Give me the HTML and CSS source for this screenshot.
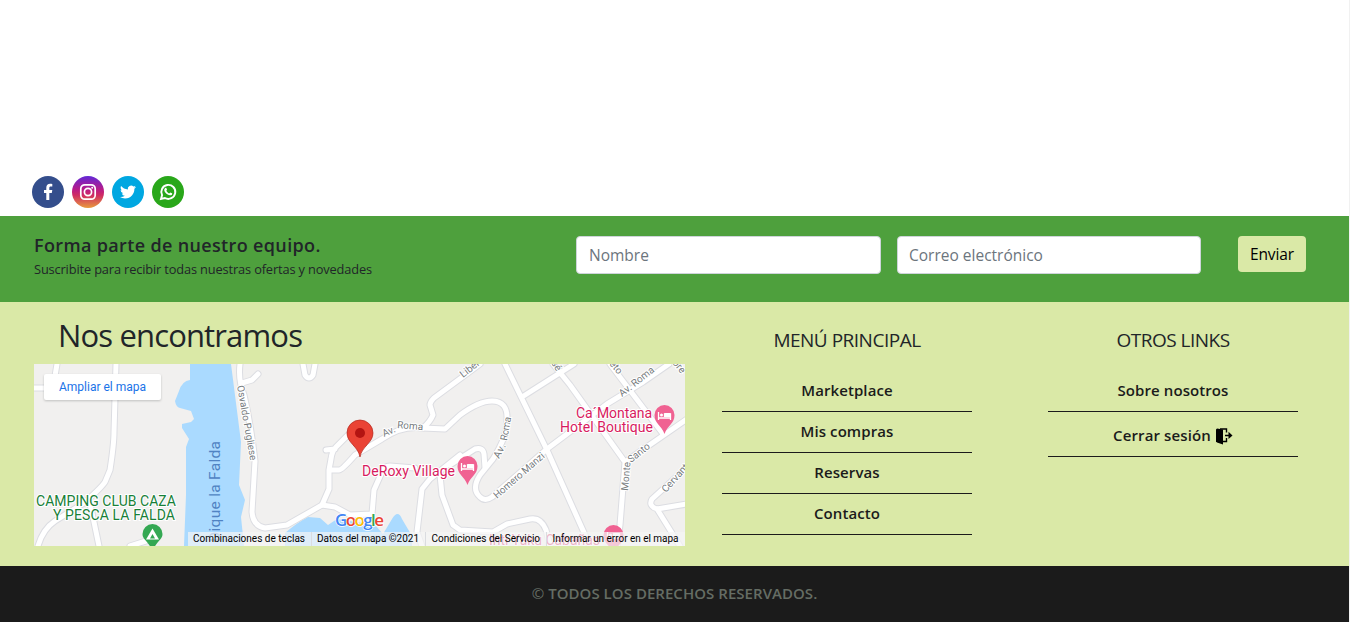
FILE: index.html
```html
<!DOCTYPE html>
<html lang="es">
<head>
<meta charset="utf-8">
<title>Nos encontramos</title>
<link rel="stylesheet" href="styles.css">
</head>
<body>
<div class="page">
<main class="content">
  <div class="social">
    <a class="social-link facebook"><svg width="20" height="20" viewBox="0 0 20 20"><path d="M8.3 18v-7H6V8h2.300V6c0-2.800 1.500-4.200 3.800-4.200 1 0 1.900.1 2.200.2v2.600h-1.500c-1.200 0-1.500.6-1.500 1.500V8h3l-.5 3h-2.500v7z" fill="#fff"/></svg></a>
    <a class="social-link instagram"><svg width="20" height="20" viewBox="0 0 20 20" fill="none" stroke="#fff" stroke-width="1.700"><rect x="2.800" y="2.800" width="14.400" height="14.400" rx="4"/><circle cx="10" cy="10" r="3.600"/><circle cx="14.200" cy="5.800" r="1" fill="#fff" stroke="none"/></svg></a>
    <a class="social-link twitter"><svg width="16" height="16" viewBox="0 0 24 24"><path fill="#fff" d="M23.950 4.570a10 10 0 0 1-2.820.775 4.960 4.960 0 0 0 2.160-2.723c-.95.555-2.005.959-3.127 1.184a4.920 4.920 0 0 0-8.384 4.482C7.690 8.095 4.067 6.130 1.640 3.162a4.822 4.822 0 0 0-.666 2.475c0 1.710.87 3.213 2.188 4.096a4.904 4.904 0 0 1-2.228-.616v.06a4.923 4.923 0 0 0 3.946 4.827 4.996 4.996 0 0 1-2.212.085 4.936 4.936 0 0 0 4.604 3.417 9.867 9.867 0 0 1-6.102 2.105c-.39 0-.779-.023-1.170-.067a13.995 13.995 0 0 0 7.557 2.209c9.053 0 13.998-7.496 13.998-13.985 0-.21 0-.42-.015-.63A9.935 9.935 0 0 0 24 4.590z"/></svg></a>
    <a class="social-link whatsapp"><svg width="18" height="18" viewBox="0 0 18 18"><path d="M2 16l1.100-3.900A7 7 0 1 1 5.900 15z" fill="none" stroke="#fff" stroke-width="1.900"/><path d="M6.200 4.900c.4-.4.900-.3 1.100.1l.7 1.600c.1.300-.6 1-.7 1.200.6 1.200 1.600 2.100 2.900 2.600.3-.1.800-1 1.100-1l1.700.8c.5.300.1 1.400-.4 1.800-1.200.8-2.900.2-4.400-.7-1.300-.9-2.700-2.600-2.900-3.900-.1-1 .3-1.900.9-2.500z" fill="#fff"/></svg></a>
  </div>
</main>
<section class="subscribe">
  <div class="subscribe-copy">
    <h2 class="subscribe-title">Forma parte de nuestro equipo.</h2>
    <p class="subscribe-text">Suscribite para recibir todas nuestras ofertas y novedades</p>
  </div>
  <form class="subscribe-form">
    <input class="field name" type="text" placeholder="Nombre">
    <input class="field mail" type="text" placeholder="Correo electrónico">
    <button class="send" type="button">Enviar</button>
  </form>
</section>
<section class="info">
  <div class="location">
    <h1 class="location-title"><span>Nos encontramos</span></h1>
    <svg class="map" viewBox="34 364 651 182" width="651" height="182">
      <defs>
        <g id="roads">
          <path d="M116 364L114 432Q114 444 110 470L105 482Q102 487 84 503L55 521Q43 529 38 546M90 504L94 522 99 546M57 364L55 376M34 388H46M130 546L146 541"/>
          <path d="M240 364Q238 380 244 395Q250 420 255 461L252 512Q253 526 265 528L287 525 322 505 335 507 350 515 372 514 374 490 382 472Q384 466 390 466L415 468M242 383L252 380 258 374M303 364L305 375Q309 381 313 375L315 364"/>
          <path d="M322 505L329 489V470L331 459Q332 451 336 447L350 433M326 450L335 449M329 470H339Q342 470 355 455L382 439Q402 425 423 428L445 429 460 415Q479 401 492 401Q508 401 507 420Q507 437 493 459L480 475Q471 489 480 497Q485 502 492 497L547 449 583 422 607 404 643 382 669 364"/>
          <path d="M423 428Q430 422 433 415L430 405Q430 402 434 398L480 364M505 364L547 450 590 546M522 397L574 364M553 364L570 385 625 462 620 525 617 546M610 364L663 434M625 462L687 419M685 469L652 499Q648 506 657 509L687 504M657 509L680 546"/>
          <path d="M450 465L475 449Q483 447 484 454L485 468M460 455L430 479 422 489 417 532 422 546M440 475L442 495 453 525 460 530 493 532 507 524 530 519Q541 517 546 530L550 546"/>
        </g>
      </defs>
      <rect x="34" y="364" width="651" height="182" fill="#f1f0ef"/>
      <g fill="#aadaff">
        <path d="M190 364V380Q182 381 179 391L175 401Q176 407 180 408L191 411 194 419 191 422 182 424 182 428 189 439 186 447V495L184 546H244L241 517 245 500 239 485 241 442 231 364z"/>
        <path d="M285 533Q298 522 308 517L320 518 328 525 337 519 375 525 383 534 392 519Q398 509 402 519L412 536V546H285z"/>
      </g>
      <use href="#roads" class="road-edge"/>
      <use href="#roads" class="road"/>
      <g class="street">
        <text transform="translate(237 386) rotate(80)" textLength="76">Osvaldo Pugliese</text>
        <text transform="translate(384 437) rotate(-24)">Av.</text>
        <text transform="translate(397 428) rotate(5)" textLength="26">Roma</text>
        <text transform="translate(463 378) rotate(-38)">Liber</text>
        <text transform="translate(551 363) rotate(57)">sé</text>
        <text transform="translate(609 364) rotate(50)">eto</text>
        <text transform="translate(622 397) rotate(-38)" textLength="42">Av. Roma</text>
        <text transform="translate(672 363) rotate(50)">ore</text>
        <text transform="translate(499 459) rotate(-62)" textLength="15">Av.</text>
        <text transform="translate(507 441) rotate(-80)" textLength="24">Roma</text>
        <text transform="translate(497 499) rotate(-41)" textLength="64">Homero Manzi</text>
        <text transform="translate(628 491) rotate(-85)" textLength="29">Monte</text>
        <text transform="translate(631 463) rotate(-38)" textLength="25">Santo</text>
        <text transform="translate(666 493) rotate(-48)">Cervantes</text>
      </g>
      <text class="lake" transform="translate(220 542) rotate(-90)" textLength="101">Dique la Falda</text>
      <g class="camping"><text x="36" y="506" textLength="140">CAMPING CLUB CAZA</text><text x="53" y="520" textLength="122">Y PESCA LA FALDA</text></g>
      <path d="M152.500 524a10 10 0 0 1 10 10c0 5-4 6-8 13h-4c-4-7-8-8-8-13a10 10 0 0 1 10-10z" fill="#34a853"/>
      <path d="M152.500 528.500l6.500 11h-13z" fill="#fff"/><path d="M152.500 534l2.500 4.500h-5z" fill="#34a853"/>
      <g class="hotel"><text x="362" y="476" textLength="93">DeRoxy Village</text><text x="576" y="418" textLength="76">Ca´Montana</text><text x="560" y="432" textLength="93">Hotel Boutique</text><text x="489" y="545" textLength="111">Inti Yaku Cabañas</text></g>
      <defs><g id="hotel-pin"><path d="M0 18C-3 9-10 8-10-1A10 10 0 0 1 10-1C10 8 3 9 0 18z" fill="#f06292"/><path d="M-6-4v8M-6 2H6M6 4V-2H0V1" fill="none" stroke="#fff" stroke-width="1.300"/><path d="M0-3h5q1.500 0 1.500 2v2H0z" fill="#fff"/><circle cx="-3" cy="-1" r="1.500" fill="#fff"/></g></defs>
      <use href="#hotel-pin" x="467.500" y="467"/><use href="#hotel-pin" x="664.500" y="416"/><use href="#hotel-pin" x="613.500" y="536"/>
      <path d="M360 457C358 446 347 443 347 433A13 13 0 0 1 373 433C373 443 362 446 360 457z" fill="#ea4335" stroke="#b3261c" stroke-width=".7"/><circle cx="360" cy="433" r="5" fill="#b31412"/>
      <text class="google" x="335" y="526" textLength="49"><tspan fill="#4285f4">G</tspan><tspan fill="#ea4335">o</tspan><tspan fill="#fbbc05">o</tspan><tspan fill="#4285f4">g</tspan><tspan fill="#34a853">l</tspan><tspan fill="#ea4335">e</tspan></text>
      <rect x="188" y="532" width="497" height="14" fill="#f5f5f5" opacity=".7"/>
      <path d="M311.500 532v14M425.500 532v14M546.500 532v14" stroke="#dadce0" stroke-width="1"/>
      <g class="credits"><text x="193" y="542" textLength="112">Combinaciones de teclas</text><text x="317" y="542" textLength="102">Datos del mapa ©2021</text><text x="431.500" y="542" textLength="108.500">Condiciones del Servicio</text><text x="552.500" y="542" textLength="126">Informar un error en el mapa</text></g>
      <rect class="map-button" x="44" y="374" width="117" height="26" rx="2"/>
      <text class="map-action" x="59" y="391" textLength="87">Ampliar el mapa</text>
    </svg>
  </div>
  <nav class="links main-menu">
    <h3 class="links-title">MENÚ PRINCIPAL</h3>
    <a class="link">Marketplace</a>
    <a class="link">Mis compras</a>
    <a class="link">Reservas</a>
    <a class="link">Contacto</a>
  </nav>
  <nav class="links other-menu">
    <h3 class="links-title">OTROS LINKS</h3>
    <a class="link">Sobre nosotros</a>
    <a class="link logout"><span>Cerrar sesión</span><svg width="17" height="17" viewBox="0 0 17 17"><path d="M0 1.500L1 .5 7 1.500V16.500L1 14.500 0 13.500z"/><path d="M4 1H10.500V4.500M7 13.500H10.500V10M9 7.500H14" fill="none" stroke="#000" stroke-width="1.400"/><path d="M12.500 3.800L16.500 7.500 12.500 11z"/></svg></a>
  </nav>
</section>
<footer class="copyright"><span>© <b>TODOS LOS DERECHOS RESERVADOS.</b></span></footer>
</div>
</body>
</html>
```
FILE: styles.css
```css
* { box-sizing: border-box; }
body { margin: 0; background: #fff; color: #212529; font-family: "Trebuchet MS", "Open Sans", "Noto Sans", sans-serif; overflow: hidden; }
h1, h2, h3, p { margin: 0; font-weight: 400; white-space: nowrap; }
.page { width: 1349px; height: 622px; display: flex; flex-direction: column; box-shadow: 1px 0 #f1f1f1; }
.content { height: 216px; display: flex; align-items: flex-end; padding: 0 32px 8px; }
.social { display: flex; gap: 8px; }
.social-link { width: 32px; height: 32px; border-radius: 50%; display: flex; align-items: center; justify-content: center; }
.facebook { background: #344e8c; }
.instagram { background: linear-gradient(#6228d7 0%, #b81b87 42%, #cf2b63 60%, #e89b3c 100%); }
.twitter { background: #00a7e1; }
.whatsapp { background: #29a71a; }
.subscribe { height: 86px; background: #4ea03d; display: flex; justify-content: space-between; padding: 20px 43px 0 34px; }
.subscribe-title { font-size: 18px; font-weight: 600; line-height: 20px; margin-top: -1px; letter-spacing: .35px; }
.subscribe-text { font-size: 12.800px; line-height: 18px; margin-top: 5px; letter-spacing: -.14px; }
.subscribe-form { display: flex; align-items: flex-start; }
.field { height: 38px; border: 1px solid #ced4da; border-radius: 4px; background: #fff; padding: 0 12px 1px; font: 15.500px "Trebuchet MS", "Open Sans", sans-serif; letter-spacing: 0; }
.field::placeholder { color: #6c757d; opacity: 1; }
.name { width: 305px; margin-right: 16px; }
.mail { width: 304px; margin-right: 37px; padding-left: 11px; }
.send { width: 68px; height: 36px; border: 0; border-radius: 4px; background: #dae9a7; color: #000; padding: 0; font: 15.500px "Trebuchet MS", "Open Sans", sans-serif; letter-spacing: -.1px; }
.info { height: 264px; background: #dae9a7; display: flex; padding-left: 34px; }
.location { width: 651px; }
.location-title { height: 62px; padding: 14px 0 0 24px; font-size: 31px; line-height: 38px; letter-spacing: -.85px; }
.map { display: block; overflow: hidden; font-family: Roboto, sans-serif; }
.road-edge { fill: none; stroke: #dcdde2; stroke-width: 7px; stroke-linejoin: round; stroke-linecap: round; }
.road { fill: none; stroke: #fff; stroke-width: 5px; stroke-linejoin: round; stroke-linecap: round; }
.street { font-size: 10px; fill: #777c80; stroke: #fff; stroke-width: 2px; paint-order: stroke; }
.lake { font-size: 15.500px; fill: #5083c3; }
.camping, .hotel { font-size: 14px; stroke: #fff; stroke-width: 2px; paint-order: stroke; }
.camping { fill: #188038; }
.hotel { fill: #d81b60; }
.google { font: 600 17px "Open Sans", sans-serif; stroke: #fff; stroke-width: 1.500px; paint-order: stroke; }
.credits { font-size: 10px; fill: #000; }
.map-button { fill: #fff; filter: drop-shadow(0 1px 1px rgba(0, 0, 0, .2)); }
.map-action { font-size: 12px; fill: #1a73e8; }
.links { width: 250px; padding-top: 28px; }
.main-menu { margin-left: 37px; }
.other-menu { margin-left: 76px; }
.links-title { text-align: center; font-size: 19px; line-height: 20px; margin-bottom: 21px; letter-spacing: -.5px; }
.link { height: 41px; padding-bottom: 3px; border-bottom: 1px solid #1b1b1b; display: flex; align-items: center; justify-content: center; font-size: 15px; font-weight: 600; letter-spacing: .08px; color: #1b1b1b; white-space: nowrap; }
.link.logout { height: 45px; padding: 4px 0 0; gap: 5px; letter-spacing: .12px; }
.logout span { margin-top: -2px; }
.copyright { height: 56px; background: #1b1b1b; color: #656d64; display: flex; align-items: center; justify-content: center; padding-bottom: 2px; font-size: 15px; white-space: nowrap; letter-spacing: .04px; }
.copyright b { font-weight: 600; }
```
